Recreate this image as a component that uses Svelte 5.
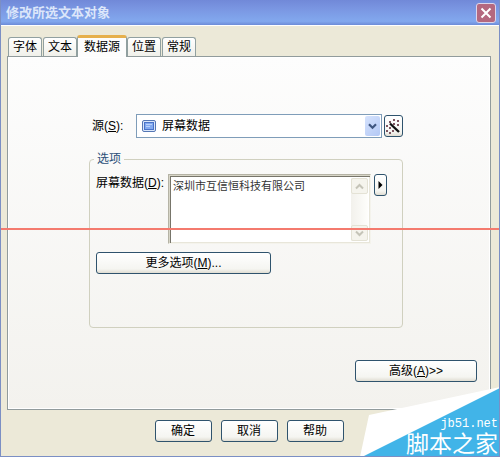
<script>
  const tabs = ['字体', '文本', '数据源', '位置', '常规'];
  let active = $state('数据源');
  let source = $state('屏幕数据');
  let screenData = $state('深圳市互信恒科技有限公司');
  const sparks = [[7, 0], [3, 2], [11, 1], [0, 6], [7, 4], [11, 5], [3, 8], [0, 11], [6, 11], [3, 13]];
</script>

<div class="dialog" role="dialog" aria-labelledby="dialog-title">
  <header class="titlebar">
    <h1 id="dialog-title">修改所选文本对象</h1>
    <button class="close" aria-label="关闭">
      <svg width="12" height="12" viewBox="0 0 12 12">
        <path d="M1.5 1.5L10.5 10.5M10.5 1.5L1.5 10.5" stroke="#fff" stroke-width="2" />
      </svg>
    </button>
  </header>

  <div class="body">
    <div class="tabs" role="tablist">
      {#each tabs as tab}
        <button
          class="tab"
          class:active={active === tab}
          role="tab"
          aria-selected={active === tab}
          onclick={() => (active = tab)}
        >{tab}</button>
      {/each}
    </div>

    <section class="panel" role="tabpanel">
      <div class="source-row">
        <label for="source">源(<u>S</u>):</label>
        <div class="combo">
          <svg class="combo-icon" width="14" height="12" viewBox="0 0 14 12">
            <rect x="0.5" y="0.5" width="13" height="11" rx="1.5" fill="#dce8fa" stroke="#5577b4" />
            <rect x="2.5" y="2.5" width="9" height="7" fill="#83aaf0" stroke="#4a73c8" />
            <path d="M4 4.5H10M4 6.5H8" stroke="#b9d1fb" />
          </svg>
          <select id="source" bind:value={source}>
            <option>屏幕数据</option>
          </select>
          <span class="combo-arrow">
            <svg width="9" height="7" viewBox="0 0 9 7">
              <path d="M1 1.2L4.5 4.7L8 1.2" fill="none" stroke="#3f5680" stroke-width="2.2" />
            </svg>
          </span>
        </div>
        <button class="btn wand" aria-label="向导">
          <svg width="15" height="15" viewBox="0 0 15 15">
            {#each sparks as [x, y]}
              <rect {x} {y} width="2" height="2" fill="#7d5560" />
            {/each}
            <path d="M4 4.5L13 13" stroke="#111" stroke-width="2.4" />
          </svg>
        </button>
      </div>

      <fieldset>
        <legend>选项</legend>
        <div class="data-row">
          <label for="screen-data">屏幕数据(<u>D</u>):</label>
          <div class="memo">
            <textarea id="screen-data" bind:value={screenData} spellcheck="false"></textarea>
            <div class="scroll">
              <button aria-label="向上滚动">
                <svg width="9" height="7" viewBox="0 0 9 7">
                  <path d="M1 5.5L4.5 2L8 5.5" fill="none" stroke="#c5c4b8" stroke-width="2" />
                </svg>
              </button>
              <button aria-label="向下滚动">
                <svg width="9" height="7" viewBox="0 0 9 7">
                  <path d="M1 1.5L4.5 5L8 1.5" fill="none" stroke="#c5c4b8" stroke-width="2" />
                </svg>
              </button>
            </div>
          </div>
          <button class="btn insert" aria-label="插入">
            <svg width="5" height="8" viewBox="0 0 5 8"><path d="M0.5 0L4.5 4L0.5 8Z" fill="#000" /></svg>
          </button>
        </div>
        <button class="btn more">更多选项(<u>M</u>)...</button>
      </fieldset>

      <button class="btn advanced">高级(<u>A</u>)&gt;&gt;</button>
    </section>

    <footer class="actions">
      <button class="btn">确定</button>
      <button class="btn">取消</button>
      <button class="btn">帮助</button>
    </footer>
  </div>

  <div class="redline"></div>

  <div class="watermark">
    <svg width="140" height="70" viewBox="0 0 140 70">
      <path d="M9 28L140 0V70H0Z" fill="#fff" />
      <path d="M140 1V70H2Z" fill="#41b4e8" />
    </svg>
    <div class="mark-text">
      <span class="mark-url">jb51.net</span>
      <span class="mark-name">脚本之家</span>
    </div>
  </div>
</div>

<style>
  :global(body) {
    margin: 0;
  }
  .dialog {
    position: relative;
    display: flex;
    flex-direction: column;
    box-sizing: border-box;
    min-height: 100vh;
    overflow: hidden;
    border: solid #7b8fc4;
    border-width: 0 1px 1px;
    background: #ece9d8;
    color: #000;
    font: 12px/16px "Liberation Sans", "Noto Sans CJK SC", sans-serif;
  }
  button, select, textarea {
    margin: 0;
    padding: 0;
    color: inherit;
    font: inherit;
  }
  svg {
    display: block;
  }
  .titlebar {
    display: flex;
    align-items: center;
    justify-content: space-between;
    height: 25px;
    padding: 0 3px 0 5px;
    background: linear-gradient(#7189d8, #7a96e2 35%, #82a8ee 85%, #6d8cd8);
  }
  h1 {
    margin: 0;
    color: #dce6fa;
    font-size: 13px;
    line-height: 16px;
  }
  .close {
    display: flex;
    align-items: center;
    justify-content: center;
    box-sizing: border-box;
    width: 20px;
    height: 20px;
    border: 1px solid #dcd5ea;
    border-radius: 3px;
    background: #b4687f;
  }
  .body {
    display: flex;
    flex: 1;
    flex-direction: column;
    padding: 9px 8px 14px 6px;
    border-top: 1px solid #fff;
  }
  .tabs {
    display: flex;
    align-items: flex-end;
    height: 21px;
    padding-left: 1px;
    gap: 1px;
  }
  .tab {
    height: 19px;
    padding: 0 4px;
    border: 1px solid #91a0a0;
    border-bottom: 0;
    border-radius: 3px 3px 0 0;
    background: linear-gradient(#fff, #f0f0ea);
  }
  .tab.active {
    position: relative;
    height: 22px;
    margin: 0 -1px -1px;
    padding: 0 6px 2px;
    border-top: 3px solid #e6b04c;
    background: #fdfdfd;
  }
  .panel {
    display: flex;
    flex: 1;
    flex-direction: column;
    padding: 57px 87px 27px 81px;
    border: 1px solid #919b9c;
    box-shadow: inset 0 0 0 1px #fff;
    background: linear-gradient(#fdfdfd, #f3f2ee);
  }
  .source-row {
    display: flex;
    align-items: center;
    gap: 2px;
  }
  .source-row label {
    width: 42px;
    padding-left: 3px;
  }
  .combo {
    position: relative;
    display: flex;
    flex: 1;
  }
  .combo-icon {
    position: absolute;
    top: 6px;
    left: 6px;
    pointer-events: none;
  }
  select {
    flex: 1;
    height: 24px;
    padding: 0 20px 0 25px;
    border: 1px solid #7f9db9;
    border-radius: 0;
    background: #fff;
    appearance: none;
  }
  .combo-arrow {
    position: absolute;
    top: 2px;
    right: 2px;
    bottom: 2px;
    display: flex;
    align-items: center;
    justify-content: center;
    width: 15px;
    border-radius: 2px;
    background: linear-gradient(135deg, #d6e3fd, #b3c8f5);
    pointer-events: none;
  }
  .btn {
    display: flex;
    align-items: center;
    justify-content: center;
    box-sizing: border-box;
    height: 22px;
    border: 1px solid #2f536d;
    border-radius: 3px;
    background: linear-gradient(#fff, #f5f5f1 80%, #e0ddd2);
  }
  .wand {
    width: 19px;
  }
  fieldset {
    min-width: 0;
    margin: 13px 0 0;
    padding: 7px 15px 53px 6px;
    border: 1px solid #d0d0bf;
    border-radius: 4px;
  }
  legend {
    padding: 0 3px;
    margin-left: -2px;
    color: #2b4f78;
  }
  .data-row {
    display: flex;
    align-items: flex-start;
    gap: 3px;
  }
  .data-row label {
    flex: none;
    width: 69px;
    padding-top: 1px;
  }
  .memo {
    display: flex;
    flex: 1;
    min-width: 0;
    box-sizing: border-box;
    height: 70px;
    border: 1px solid #b5b3a5;
    border-color: #b5b3a5 #f4f3ec #f4f3ec #b5b3a5;
    background: #fff;
    box-shadow: inset 1px 1px 0 #d8d6c8, inset 2px 2px 0 #77756a, inset -1px -1px 0 #e8e6da;
  }
  textarea {
    flex: 1;
    min-width: 0;
    padding: 3px 0 0 4px;
    border: 0;
    outline: 0;
    background: transparent;
    color: #333;
    font-size: 11px;
    line-height: 16px;
    overflow: hidden;
    resize: none;
  }
  .scroll {
    display: flex;
    flex-direction: column;
    justify-content: space-between;
    width: 17px;
    margin: 3px 2px 2px 0;
    background: linear-gradient(90deg, #f2f1ec, #fefefb);
  }
  .scroll button {
    display: flex;
    align-items: center;
    justify-content: center;
    box-sizing: border-box;
    height: 16px;
    border: 1px solid #e4e2d5;
    border-radius: 2px;
    background: #f5f4ed;
  }
  .insert {
    width: 13px;
  }
  .more {
    width: 175px;
    margin-top: 8px;
  }
  .advanced {
    align-self: flex-end;
    width: 122px;
    margin: auto -74px 0 0;
  }
  .actions {
    display: flex;
    justify-content: center;
    gap: 9px;
    padding-top: 10px;
  }
  .actions .btn {
    width: 57px;
  }
  .redline {
    position: absolute;
    top: 228px;
    left: 0;
    right: 0;
    height: 2px;
    background: #f47a6e;
  }
  .watermark {
    position: absolute;
    right: -1px;
    bottom: -1px;
  }
  .mark-text {
    position: absolute;
    right: 2px;
    bottom: 2px;
    display: flex;
    flex-direction: column;
    align-items: flex-end;
    color: #fff;
    white-space: nowrap;
  }
  .mark-url {
    font: 12px/12px "Liberation Mono", monospace;
  }
  .mark-name {
    font: 23px/25px "Noto Sans CJK SC", sans-serif;
  }
</style>
